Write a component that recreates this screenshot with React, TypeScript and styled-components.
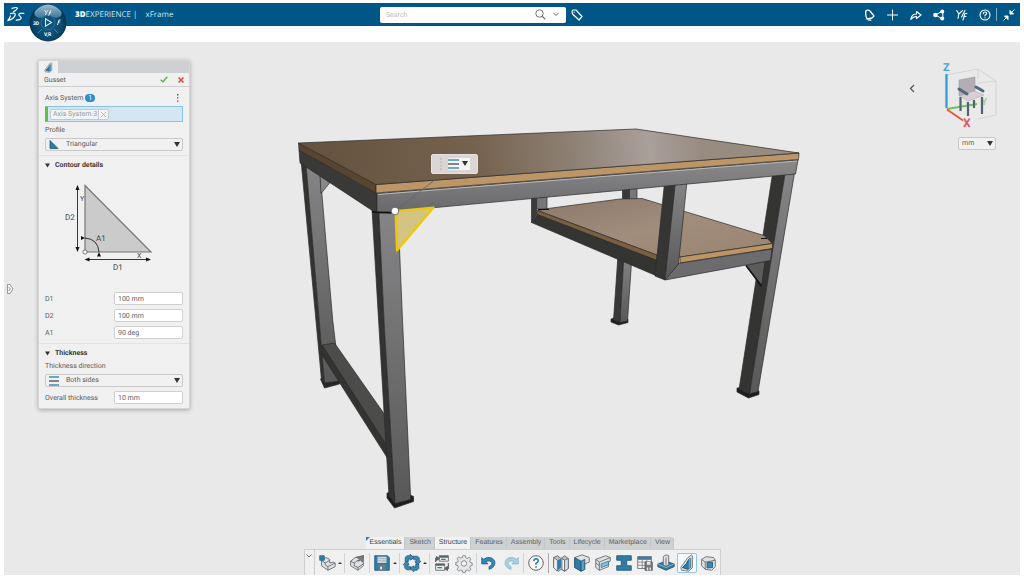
import React from "react";
import styled, { createGlobalStyle } from "styled-components";

const GlobalStyle = createGlobalStyle`
  *, *::before, *::after { box-sizing: border-box; }
  body {
    margin: 0;
    background: #ffffff;
    color: #5c5c5c;
    font: 7px/10px Roboto, "Liberation Sans", sans-serif;
    text-rendering: geometricPrecision;
  }
  button, input, select { font: inherit; color: inherit; margin: 0; padding: 0; text-rendering: inherit; }
  button { border: 0; background: none; cursor: pointer; }
  svg { display: block; }
`;

const Frame = styled.div`
  display: flex;
  flex-direction: column;
  min-height: 100vh;
  padding: 3px 4px;
`;

/* ---------- top bar ---------- */

const TopBar = styled.header`
  display: grid;
  grid-template-columns: 37% 186px 1fr;
  align-items: center;
  height: 23px;
  background: #005686;
  color: #ffffff;
`;

const BrandArea = styled.div`
  display: flex;
  align-items: center;
  height: 23px;
  padding-left: 3px;
`;

const Compass = styled.button`
  align-self: flex-start;
  width: 38px;
  height: 39px;
  margin: 0 8px 0 4px;
  z-index: 2;
`;

const Brand = styled.h1`
  display: flex;
  gap: 8px;
  margin: 0;
  font: 400 8px/12px "Open Sans", "Noto Sans", sans-serif;
  color: #d5e4ee;
  white-space: nowrap;

  b { color: #ffffff; font-weight: 800; }
`;

const SearchBox = styled.form`
  display: flex;
  align-items: center;
  height: 16px;
  padding: 0 3px 0 6px;
  border-radius: 2px;
  background: #ffffff;
`;

const SearchInput = styled.input`
  flex: 1;
  min-width: 0;
  border: 0;
  outline: 0;
  background: none;
  color: #555555;

  &::placeholder { color: #bdbdbd; opacity: 1; }
`;

const BarButton = styled.button<{ $w?: number }>`
  display: flex;
  align-items: center;
  justify-content: center;
  width: ${(p) => p.$w ?? 23}px;
  height: 16px;
`;

const BarActions = styled.div`
  display: flex;
  align-items: center;
  justify-content: space-between;
`;

const ActionGroup = styled.div`
  display: flex;
  align-items: center;
`;

const BarDivider = styled.span`
  width: 1px;
  height: 13px;
  background: #7fabc3;
`;

const SubBar = styled.div`
  height: 16px;
  background: #ffffff;
`;

/* ---------- viewport ---------- */

const Stage = styled.main`
  position: relative;
  display: flex;
  flex: 1;
  flex-direction: column;
  justify-content: space-between;
  background: #e9e9e9;
`;

const ModelLayer = styled.div`
  position: absolute;
  inset: 0;
`;

const FloatingBar = styled.div`
  position: absolute;
  left: 42%;
  top: 21%;
  display: flex;
  align-items: center;
  justify-content: space-between;
  width: 47px;
  height: 20px;
  padding: 0 7px 0 8px;
  border: 1px solid #e4e2e0;
  border-radius: 2px;
  background: #d9d6d3;
`;

const FloatingButton = styled.button`
  display: flex;
  align-items: center;
  gap: 3px;
  width: 22px;
  height: 12px;
  border-radius: 1px;
  background: #f4f4f4;
`;

const Overlay = styled.div`
  position: relative;
  display: flex;
  align-items: flex-start;
  padding-top: 18px;
`;

const TreeToggle = styled.button`
  width: 8px;
  height: 12px;
  margin: 223px 24px 0 2px;
`;

/* ---------- gusset panel ---------- */

const Panel = styled.section`
  width: 152px;
  border: 1px solid #d6d6d6;
  background: #f0f0f0;
  border-radius: 2px;
  box-shadow: 0 1px 4px rgba(0, 0, 0, 0.3);
`;

const PanelTabs = styled.div`
  display: flex;
  height: 12px;
  background: #cdd1d3;
`;

const PanelTab = styled.button`
  display: flex;
  align-items: center;
  justify-content: center;
  width: 19px;
  height: 12px;
  background: #f0f0f0;
`;

const PanelTitle = styled.div`
  display: flex;
  align-items: center;
  height: 14px;
  padding: 0 3px 0 5px;
  border-bottom: 1px solid #cfcfcf;

  h2 { flex: 1; margin: 0; font: inherit; }
`;

const TitleButton = styled.button`
  display: flex;
  justify-content: center;
  width: 10px;
  margin-left: 7px;
`;

const Group = styled.div<{ $top?: number }>`
  padding: ${(p) => p.$top ?? 4}px 6px 4px;

  & + & { border-top: 1px solid #e3e3e3; }
`;

const Caption = styled.div<{ $top?: number }>`
  display: flex;
  align-items: center;
  height: 10px;
  margin: ${(p) => p.$top ?? 0}px 0 3px;
`;

const CountBadge = styled.span`
  width: 10px;
  height: 8px;
  margin-left: 2px;
  border-radius: 4px;
  background: #2f8dcb;
  color: #ffffff;
  line-height: 8px;
  text-align: center;
`;

const MoreButton = styled.button`
  width: 8px;
  margin-left: auto;
`;

const SelectionField = styled.div`
  display: flex;
  align-items: center;
  height: 16px;
  padding-left: 2px;
  border: 1px solid #86c3e6;
  border-left: 3px solid #5bbf4c;
  border-radius: 1px;
  background: #d4e6f1;
`;

const Chip = styled.span`
  display: flex;
  align-items: center;
  height: 11px;
  padding-left: 2px;
  border: 1px solid #c3c9cc;
  border-radius: 2px;
  background: #f2f4f5;
  color: #9a9a9a;
`;

const ChipClose = styled.button`
  display: flex;
  align-items: center;
  justify-content: center;
  width: 10px;
  height: 9px;
  margin-left: 1px;
  border-left: 1px solid #c3c9cc;
`;

const SelectWrap = styled.div<{ $w?: number }>`
  display: grid;
  width: ${(p) => (p.$w ? `${p.$w}px` : "auto")};
  height: 13px;
  align-items: center;

  & > * { grid-area: 1 / 1; }
  & > svg { pointer-events: none; z-index: 1; }
  & > svg:first-child { margin-left: 4px; }
  & > svg:last-child { justify-self: end; margin: 0 3px 0 0; }
`;

const Select = styled.select<{ $indent: number }>`
  appearance: none;
  width: 100%;
  height: 13px;
  padding: 0 12px 0 ${(p) => p.$indent}px;
  border: 1px solid #c9c9c9;
  border-radius: 2px;
  background: #f1f1f1;
  line-height: 11px;
`;

const SectionToggle = styled.button`
  display: flex;
  align-items: center;
  gap: 5px;
  height: 10px;
  color: #3a3a3a;
  font-weight: 700;
`;

const Diagram = styled.svg`
  width: 100%;
  height: 122px;
  font-family: Roboto, "Liberation Sans", sans-serif;
`;

const Field = styled.div`
  display: flex;
  align-items: center;
  justify-content: space-between;
  height: 13px;

  * + & { margin-top: 4px; }
  svg + & { margin-top: 0; }
`;

const FieldInput = styled.input`
  width: 69px;
  height: 13px;
  padding: 0 3px;
  border: 1px solid #cfcfcf;
  border-radius: 2px;
  background: #ffffff;
`;

/* ---------- view controls ---------- */

const ViewTools = styled.aside`
  display: flex;
  align-items: flex-start;
  margin: 0 24px 0 auto;
`;

const ViewCollapse = styled.button`
  margin: 24px 27px 0 0;
`;

const ViewStack = styled.div`
  display: flex;
  flex-direction: column;
  align-items: flex-end;
  gap: 9px;
`;

const Cube = styled.svg`
  width: 54px;
  height: 68px;
  overflow: visible;
`;

/* ---------- action bar ---------- */

const ActionBar = styled.footer`
  position: relative;
  align-self: center;
`;

const TabList = styled.div`
  display: flex;
  width: max-content;
  margin-left: 62px;
  border-radius: 3px 3px 0 0;
  overflow: hidden;
  font-family: "Liberation Sans", Arial, sans-serif;
`;

const Tab = styled.button<{ $open: boolean }>`
  height: 12px;
  padding: 0 4px;
  background: ${(p) => (p.$open ? "#f2f2f2" : "#ced1d2")};
  box-shadow: inset -1px 0 0 #c3c7c8;
  color: ${(p) => (p.$open ? "#3f4142" : "#5f6263")};
  white-space: nowrap;
`;

const EssentialMark = styled.i`
  position: absolute;
  left: 62px;
  top: 0;
  border-top: 4px solid #2f7fab;
  border-right: 4px solid transparent;
`;

const ToolRow = styled.div`
  display: flex;
  align-items: center;
  height: 26px;
  border: 1px solid #cfcfcf;
  border-bottom: 0;
  background: #f0f0f0;
`;

const CollapseButton = styled.button`
  align-self: stretch;
  display: flex;
  justify-content: center;
  width: 10px;
  padding-top: 4px;
  border-right: 1px solid #cfcfcf;
`;

const ToolGroup = styled.div<{ $gap?: number; $strong?: boolean }>`
  display: flex;
  gap: ${(p) => p.$gap ?? 2}px;
  padding: 0 2px;
  border-left: 1px solid ${(p) => (p.$strong ? "#a9a9a9" : "#d3d3d3")};

  ${CollapseButton} + & { border-left: 0; }
`;

const ToolButton = styled.button<{ $menu?: boolean; $on?: boolean }>`
  display: flex;
  align-items: center;
  gap: 1px;
  width: ${(p) => (p.$menu ? 25 : 20)}px;
  height: 20px;
  border-radius: 2px;
  background: ${(p) => (p.$on ? "#f8fbfd" : "none")};
  box-shadow: ${(p) => (p.$on ? "inset 0 0 0 1px #93c5e0" : "none")};

  &::after {
    content: "";
    display: ${(p) => (p.$menu ? "block" : "none")};
    border: 2px solid transparent;
    border-top: 0;
    border-bottom: 2px solid #333333;
  }
`;

/* ---------- drawings ---------- */

const Caret = ({ size = 6 }: { size?: number }) => (
  <svg width={size} height="5" viewBox="0 0 6 5"><path d="M0 0h6L3 5z" fill="#333" /></svg>
);

const LinesIcon = ({ w = 10 }: { w?: number }) => (
  <svg width={w} height="10" viewBox="0 0 10 10" preserveAspectRatio="none">
    <path d="M0 1h10M0 9h10" stroke="#3f8fb8" strokeWidth="1.4" />
    <path d="M0 5h10" stroke="#555" strokeWidth="1.4" />
  </svg>
);

const GussetGlyph = ({ size }: { size: number }) => (
  <svg width={size} height={size} viewBox="0 0 20 20" strokeLinejoin="round">
    <path d="M3 15L11 4l4-3 1 1v13l-4 4-8-1z" fill="#d9dcde" stroke="#6b6f72" strokeWidth=".9" />
    <path d="M5 15q5-4 7-9l2-1v10l-3 2z" fill="#2f7da6" stroke="#144866" />
    <path d="M12 6l2-2v11l-2 2z" fill="#6aa5c2" />
  </svg>
);

const LogoDS = () => (
  <svg width="18" height="17" viewBox="0 0 18 17" fill="none" stroke="#fff" strokeWidth="1.2" strokeLinecap="round" strokeLinejoin="round">
    <path d="M5 2.400Q9.800.900 10.300 2.100 10.300 3.800 6.500 5.800" />
    <path d="M3.400 7.600Q8.800 6.400 8.200 9 6.800 13 .9 14.600L3.600 10" />
    <path d="M16.800 7.400q-5-.5-5 1.200 0 1.100 1.500 2 1.700 1.500-.1 2.700-1.500.9-4 .8" />
  </svg>
);

const CompassArt = () => (
  <svg width="38" height="39" viewBox="0 0 38 39">
    <defs>
      <radialGradient id="cp" cx=".5" cy=".55" r=".5">
        <stop offset="0" stopColor="#17608b" />
        <stop offset=".8" stopColor="#0a4569" />
        <stop offset="1" stopColor="#063351" />
      </radialGradient>
      <linearGradient id="cs" x1="0" y1="0" x2="0" y2="1">
        <stop offset="0" stopColor="#9dbed1" />
        <stop offset="1" stopColor="#3c7699" />
      </linearGradient>
    </defs>
    <circle cx="19" cy="20" r="18.500" fill="url(#cp)" />
    <path d="M6 8Q12 1.500 19 1.500T32 8q2 4-2 6-3 1.500-5 .5-6-4-12 0-2 1-5-.5-4-2-2-6z" fill="url(#cs)" />
    <path d="M9 30l4-4M29 30l-4-4" stroke="#3984ad" />
    <circle cx="19" cy="19.500" r="7" fill="#0f5179" stroke="#2c7aa5" strokeWidth=".8" />
    <path d="M16.500 15.800l6 3.700-6 3.700z" fill="none" stroke="#d7e8f2" strokeWidth="1.100" />
    <path d="M15.500 7.200l1.800 2.300 1.700-2.300M17.300 9.500l-.8 2.500M22 7l-2.500 5.500M20.200 9.800h2M31.500 17h-1.500l-1.500 5M29.200 19h2" fill="none" stroke="#e9f2f7" />
    <g fill="#fff" fontFamily="Roboto, sans-serif" fontWeight="700" fontSize="5">
      <text x="4" y="21.500">3D</text>
      <text x="15" y="33">V,R</text>
    </g>
  </svg>
);

const stroke = { fill: "none", stroke: "#fff", strokeWidth: 1.3, strokeLinejoin: "round", strokeLinecap: "round" } as const;

const barIcons: { name: string; art: React.ReactNode }[] = [
  { name: "Notifications", art: <g {...stroke}><path d="M2 1.500Q4.500.500 6 2l4 5-2 2-5 1Q1 6 2 1.500z" /><path d="M4.500 10.800l2.300.4" /></g> },
  { name: "Add", art: <path d="M5.500 1v10M.5 6h10" {...stroke} strokeWidth={1} /> },
  { name: "Share", art: <path d="M.8 10.500q.7-5.500 5.700-5.500V2.500L11 6 6.500 9.500V7.500Q3 7.500.8 10.500z" {...stroke} strokeWidth={1.100} /> },
  { name: "Collaborate", art: <g><path d="M9.500 2l-7 4 7 4z" {...stroke} strokeWidth={1} /><circle cx="9.200" cy="2.500" r="2" fill="#fff" /><circle cx="2.400" cy="6" r="2.200" fill="#fff" /><circle cx="9.200" cy="9.500" r="2" fill="#fff" /></g> },
  { name: "Tools", art: <g {...stroke} strokeWidth={1.100}><path d="M.8 1.500l2 3.500L6.500 1.500M2.800 5L2 9.500M11 4.500H9L7 11M7.700 7.500H10M9 1.500L5.500 8" /></g> },
  { name: "Help", art: <g {...stroke} strokeWidth={1.100}><circle cx="6" cy="6" r="5" /><path d="M4.300 4.700q.2-1.700 1.800-1.700t1.600 1.500Q7.600 5.400 6 6.200V7M6 8.700v.2" /></g> },
];

const C = { edge: "#5d6265", light: "#dfe2e4", mid: "#b9bec1", blue: "#2f7da6", pale: "#8fbdd4" };

const art: Record<string, React.ReactNode> = {
  newPart: <g stroke={C.edge}><path d="M4 7l5-3 4 2v4l4-1 2 1v4l-8 4-7-5z" fill={C.light} /><path d="M4 7l4 3v2l3 2 8-4M8 10l5-3M11 14v4" fill="none" /><path d="M2 2h5v5H2z" fill={C.blue} stroke="#1f6b94" /></g>,
  openPart: <g stroke={C.edge}><path d="M3 8l5-4 9-2v11l-6 5-8-5z" fill={C.light} /><path d="M3 8l4 2v3l4 2 6-4M7 10l4-3M11 15v3" fill="none" /><path d="M9 4l8-2-1 7-2-2-3 1 2-3z" fill="#7d8285" /></g>,
  save: <g><path d="M2 2h14l2 2v14H2z" fill={C.blue} stroke="#1d5676" /><path d="M5 3h10v7H5z" fill="#cfd4d7" /><path d="M5 5h10M5 7.500h10" stroke="#9aa1a5" strokeWidth=".6" /><path d="M6 12h8v6H6z" fill="#747b80" /><path d="M8 14h2v3H8z" fill="#eee" /></g>,
  update: (
    <g>
      {[0, 90, 180, 270].map((a) => (
        <path key={a} transform={`rotate(${a} 10 10)`} d="M2.500 8.500V4l2-2H8V.300L12.300 4 8 7.500V5.500H6v3z" fill="#3a8ab4" stroke="#1d5676" strokeWidth=".8" />
      ))}
      <circle cx="10" cy="10" r="3.300" fill="#f0f0f0" />
    </g>
  ),
  swap: <g stroke={C.edge}><path d="M7 2h10v6H7zM3 11h10v7H3z" fill="#eef0f1" /><path d="M7 3h10M3 12h10" strokeWidth="2.200" /><path d="M9 6h5M5 15h5" stroke={C.blue} strokeWidth="1.400" /><path d="M3 9V5h3M17 10v6h-3M4 3l3 2-3 2zM16 14l-3 2 3 2z" fill="none" strokeWidth="1.300" /></g>,
  gear: <g fill="#e6e8e9" stroke="#777b7e"><path d="M8.600 2h2.800l.5 2.300 1.700.7 2-1.300 2 2-1.300 2 .7 1.700 2 .5v2.800l-2 .5-.7 1.700 1.300 2-2 2-2-1.300-1.700.7-.5 2H8.600l-.5-2-1.700-.7-2 1.300-2-2 1.300-2L3 12.700l-2-.5V9.400l2-.5.700-1.700-1.300-2 2-2 2 1.300L8.100 4z" /><circle cx="10" cy="10.500" r="3" fill="#f5f5f5" /></g>,
  undo: <path d="M2 4l2 2q4-3.500 9-1.500 5 3 3 8-1.500 3.500-6 4.500v-3q4-1.500 3-4.500Q11 6.500 6.500 8.500L9 11H2z" fill="#3586b2" stroke="#1c5c80" strokeWidth=".8" />,
  redo: <path d="M18 4l-2 2Q12 2.500 7 4.500q-5 3-3 8Q5.500 16 10 17v-3q-4-1.500-3-4.500Q9 6.500 13.500 8.500L11 11h7z" fill="#a9d0e3" stroke="#7fb3cc" strokeWidth=".8" />,
  help: <g fill="none"><circle cx="10" cy="10" r="8" fill="#fafafa" stroke="#666" strokeWidth="1.100" /><path d="M7.500 8q.2-2.600 2.600-2.600T12.500 7.700Q12.400 9 10 10.500V12M10 13.600v1.500" stroke="#2b7aa5" strokeWidth="1.700" /></g>,
  profile: <g stroke={C.edge}><path d="M2 4l4-2 4 3 4-3 4 3v11l-4 3-4-2-3 2-5-4z" fill={C.mid} /><path d="M2 4l4 3v12l-4-4zM11 5l3 2v12l-3-2z" fill="#f4f5f5" /><path d="M14 7l4-2v11l-4 3z" fill="#dfe2e4" /><path d="M6.500 7L10 5v10l-3.500 3z" fill={C.blue} stroke="none" /></g>,
  plate: <g stroke={C.edge}><path d="M2 4l8-3 8 3v5l-5 2v6l-4 2-7-4z" fill={C.light} /><path d="M2 4l7 4v11l-7-4z" fill={C.blue} stroke="#1d5676" /><path d="M9 8l4-2v11l-4 2z" fill="#5f9fbe" stroke="#1d5676" /></g>,
  trim: <g stroke={C.edge}><path d="M2 6l11-4 5 2v4l-2 1v5L6 18l-4-3z" fill={C.light} /><path d="M2 6l4 3 12-5M6 9v9M2 10l4 3" fill="none" /><path d="M8 11l8-3v4l-8 3z" fill={C.pale} stroke={C.blue} /></g>,
  beam: <path d="M2 2h16v5h-5v6h5v5H2v-5h5V7H2z" fill={C.blue} stroke="#1d5676" />,
  table: <g><path d="M2 3h15v13H2z" fill="#f4f5f5" stroke={C.edge} /><path d="M2 3h15v3.500H2z" fill="#46799a" /><path d="M2 9h15M2 12.500h15M7 6v10M12 6v10" stroke="#7b8083" /><path d="M10 9h8v9h-8z" fill="#777c7f" stroke="#555" /><path d="M12 9h4v3h-4zM12 15h1.500v3H12zM15 15h1.500v3H15z" fill="#e7e9ea" /></g>,
  foot: <g stroke={C.edge}><path d="M1 11l9-3 9 3v3l-9 4-9-4z" fill={C.blue} stroke="#1d5676" /><path d="M1 11l9 4 9-4" fill="none" stroke={C.pale} /><path d="M7 3l3-2 3 1v10l-3 2-3-2z" fill={C.light} /><path d="M10 4v10" /></g>,
  gusset: <GussetGlyph size={20} />,
  cap: <g stroke={C.edge}><path d="M3 6l5-3 8 1 2 3v7l-4 4-7-1-4-4z" fill={C.light} /><path d="M3 6l4 3 11-2M7 9v8" fill="none" /><path d="M9 9.500l6-.500v6l-6 .500z" fill="#3d86ad" stroke="#1d5676" /></g>,
};

type ToolDef = { id: string; name: string; menu?: boolean; on?: boolean };
const toolGroups: ToolDef[][] = [
  [{ id: "newPart", name: "New part", menu: true }],
  [{ id: "openPart", name: "Open part" }],
  [{ id: "save", name: "Save", menu: true }],
  [{ id: "update", name: "Update", menu: true }],
  [{ id: "swap", name: "Switch windows" }, { id: "gear", name: "Settings" }],
  [{ id: "undo", name: "Undo" }, { id: "redo", name: "Redo" }],
  [{ id: "help", name: "Help" }],
  [
    { id: "profile", name: "Structure member" },
    { id: "plate", name: "Corner" },
    { id: "trim", name: "Trim" },
    { id: "beam", name: "Profile" },
    { id: "table", name: "Cut list" },
    { id: "foot", name: "Foot plate" },
    { id: "gusset", name: "Gusset", on: true },
    { id: "cap", name: "End cap" },
  ],
];

const tabs = ["Essentials", "Sketch", "Structure", "Features", "Assembly", "Tools", "Lifecycle", "Marketplace", "View"];
const openTabs = ["Essentials", "Structure"];

const Desk = () => (
  <svg width="100%" height="100%" viewBox="4 42 1016 533" role="img" aria-label="Desk frame model">
    <defs>
      <linearGradient id="wood" gradientUnits="userSpaceOnUse" x1="330" y1="170" x2="700" y2="130">
        <stop offset="0" stopColor="#665441" />
        <stop offset=".4" stopColor="#75634f" />
        <stop offset=".65" stopColor="#8d8074" />
        <stop offset=".86" stopColor="#a9a09a" />
        <stop offset="1" stopColor="#988b80" />
      </linearGradient>
      <linearGradient id="shelf" x1="0" y1="0" x2="1" y2="1">
        <stop offset="0" stopColor="#8b7869" />
        <stop offset=".5" stopColor="#a18d7c" />
        <stop offset="1" stopColor="#9a8370" />
      </linearGradient>
      <linearGradient id="beamFace" x1="0" y1="0" x2="0" y2="1">
        <stop offset="0" stopColor="#8a8a8c" />
        <stop offset="1" stopColor="#68686a" />
      </linearGradient>
      <linearGradient id="leg" x1="0" y1="0" x2="0" y2="1">
        <stop offset="0" stopColor="#858587" />
        <stop offset="1" stopColor="#585858" />
      </linearGradient>
    </defs>
    <g stroke="#2b2b2b" strokeWidth=".7" strokeLinejoin="round">
      {/* rear right leg */}
      <path d="M611 319l8-2 9 2v3.500l-9.500 2.500-7.500-3z" fill="#1f1f1f" />
      <path d="M618 255h6l-4 67.500-6.500-2.500z" fill="#383837" />
      <path d="M624 255h8l-4.500 66-7.500 1.500z" fill="url(#leg)" />
      <path d="M622.500 186h7v14h-7z" fill="#383837" />
      <path d="M629.500 186h7.500v14h-7.500z" fill="#77777a" />
      {/* rear left leg */}
      <path d="M320.500 379l3-2 16 3v4l-15 4z" fill="#262626" />
      <path d="M301 160l5 4 18.500 219-3-3z" fill="#333332" />
      <path d="M306 164l14 8 12.700 148 7.300 61-15.500 2z" fill="url(#leg)" />
      <path d="M320 175l10 7.500-9 11z" fill="#88888a" />
      {/* lower rail */}
      <path d="M322 345l12.500-2 54 77v32z" fill="#4c4c4a" />
      <path d="M322 345v10l66 104v-12z" fill="#333331" />
      {/* right leg */}
      <path d="M737 388l11-1 11 4v3.500L748.500 398 737 392z" fill="#1d1d1d" />
      <path d="M772.500 174H785l-35.500 220-10.500-4.500z" fill="#343433" />
      <path d="M785 174l9.500-1L758 391.500l-8.500 2.500z" fill="url(#leg)" />
      <path d="M746 265.500l19-4-3.500 25z" fill="#5c5c5d" />
      <path d="M746 265.500l15.500 20.500" stroke="#111" strokeWidth="1.600" />
      {/* shelf */}
      <path d="M531.500 197h5.200v17l-5.200 8.500z" fill="#3a3a3a" />
      <path d="M536.700 197h10.300v12h-10.300z" fill="#77777a" />
      <path d="M538 210.500l10-2 72-9.500 22-.5 122 37 8.500 8-92 13.500-24-2z" fill="url(#shelf)" />
      <path d="M537 210.500l120 44.500v5.500L537 214.500z" fill="#7b5f40" />
      <path d="M680 257l92.500-13.500v5L680 263z" fill="#bd9565" />
      <path d="M531.500 222.500l5.500-8 120 46v15.500z" fill="#343433" />
      <path d="M678 263.500l94-14.500-1.500 11.500L665 280z" fill="#6c6c6e" />
      <path d="M538 209.500h11M761 238.500h6" stroke="#111" strokeWidth="1" />
      {/* middle post */}
      <path d="M664.500 183l11-1-10.500 98-10-4z" fill="#353534" />
      <path d="M675.500 182l11.500-1-8.500 83L665 280z" fill="url(#leg)" />
      {/* front left leg */}
      <path d="M387 493l14-2 12.500 5.500v5L394.500 508 387 498z" fill="#1e1e1e" />
      <path d="M372 209l7 4 5 107 11 183.500-6-7.500z" fill="#333332" />
      <path d="M379 213h19l4.500 107 8.200 179.500L395 503.500 384 320z" fill="url(#leg)" />
      {/* top frame and board */}
      <path d="M299 150l78 43.500v19.500l-4-2-73-48z" fill="#393938" />
      <path d="M377 193.500L798 160l-2.500 14L377 213z" fill="url(#beamFace)" />
      <path d="M378 194.500l419-33.500" stroke="#b9b9bb" strokeWidth="1" />
      <path d="M298.500 143L376 184.500v8.500l-77-43z" fill="#59452f" />
      <path d="M376 184.500L799 153l-.5 6.500L376 193z" fill="#bd9668" />
      <path d="M298.500 143L636 129l163 24-423 31.500z" fill="url(#wood)" />
      <path d="M372 212l26 1" stroke="#111" strokeWidth="1.300" />
    </g>
    <path d="M441 175l-46 36" stroke="#66625f" strokeWidth=".8" />
    <path d="M395.500 211l38-3.500-36.500 43z" fill="#d4c482" stroke="#f0c800" strokeWidth="2.200" strokeLinejoin="round" />
    <circle cx="395" cy="211" r="3.800" fill="#fff" stroke="#555" strokeWidth=".8" />
  </svg>
);

const ViewCube = () => (
  <Cube viewBox="0 0 54 68">
    <path d="M4 15l32-6 18 12v34l-18 4M36 9v10M54 21L36 23M4 15v34" fill="none" stroke="#cfcfcf" strokeWidth=".8" />
    <path d="M4.500 14v34" stroke="#2e9bd8" strokeWidth="2.200" />
    <path d="M5 49l30-5" stroke="#7dba5d" strokeWidth="1.800" />
    <path d="M5 49.500l16 11" stroke="#e8553f" strokeWidth="1.800" />
    <g fontFamily="Roboto, sans-serif" fontWeight="700" fontSize="11">
      <text x="1" y="11" fill="#45a5da">Z</text>
      <text x="39" y="45" fill="#a5cf90" fontSize="10">Y</text>
      <text x="21" y="67" fill="#e55368" fontSize="12">X</text>
    </g>
    <g stroke="#4e6470" strokeWidth="2.200"><path d="M18.500 37v14M26 42v14M32 40v8M40 37v17" /></g>
    <path d="M17 20l16-3v15l-16 4z" fill="#b4adb5" stroke="#99939c" strokeWidth=".5" />
    <path d="M18 36l14-5 10 4-16 6z" fill="#d8cfd6" stroke="#a9a2a8" strokeWidth=".5" />
    <path d="M17 29l8 5M34 27l7 4" stroke="#4e6b7e" strokeWidth="3" strokeLinecap="round" />
  </Cube>
);

const GussetDiagram = () => (
  <Diagram viewBox="0 0 138 122" fill="#444" fontSize="8">
    <path d="M40 15.500V82h66z" fill="#cbcbcb" stroke="#777" strokeWidth="1.200" />
    <g stroke="#222" strokeWidth=".9" fill="none">
      <path d="M32.500 18v61M42 89.500h62" />
      <path d="M40 68q13 1 14 14" />
    </g>
    <path d="M32.500 15l2 5h-4zM32.500 82l2-5h-4zM39.500 89.500l5-2v4zM106 89.500l-5-2v4zM40 68l-4-2v4zM54 82l-2 4.500h4z" fill="#111" />
    <circle cx="40" cy="82" r="2.100" fill="#fff" stroke="#666" strokeWidth=".9" />
    <text x="20" y="50">D2</text>
    <text x="68" y="100">D1</text>
    <text x="51" y="71">A1</text>
    <text x="35" y="31" fontSize="7">Y</text>
    <text x="92" y="88" fontSize="7">X</text>
  </Diagram>
);

export default function App() {
  return (
    <>
      <GlobalStyle />
      <Frame>
        <TopBar>
          <BrandArea>
            <LogoDS />
            <Compass aria-label="Compass"><CompassArt /></Compass>
            <Brand><span><b>3D</b>EXPERIENCE |</span><span>xFrame</span></Brand>
          </BrandArea>
          <SearchBox role="search" onSubmit={(e) => e.preventDefault()}>
            <SearchInput type="search" placeholder="Search" aria-label="Search" />
            <BarButton type="submit" $w={16} aria-label="Run search">
              <svg width="11" height="11" viewBox="0 0 11 11" fill="none" stroke="#777"><circle cx="4.500" cy="4.500" r="3.700" /><path d="M7.200 7.200l3 3" strokeWidth="1.300" /></svg>
            </BarButton>
            <BarButton type="button" $w={14} aria-label="Search options">
              <svg width="6" height="5" viewBox="0 0 6 5" fill="none" stroke="#666"><path d="M.5 1L3 3.500 5.500 1" /></svg>
            </BarButton>
          </SearchBox>
          <BarActions>
            <BarButton aria-label="Tags">
              <svg width="12" height="12" viewBox="0 0 12 12" {...stroke} strokeWidth={1.200}><path d="M1 2.500L2 1h3l6 6.500L8 11 1.500 5zM3.200 3.200v.1" /></svg>
            </BarButton>
            <ActionGroup>
              {barIcons.map((i) => (
                <BarButton key={i.name} aria-label={i.name}><svg width="12" height="12" viewBox="0 0 12 12">{i.art}</svg></BarButton>
              ))}
              <BarDivider />
              <BarButton aria-label="Minimize">
                <svg width="12" height="12" viewBox="0 0 12 12" stroke="#fff" fill="#fff" strokeWidth="1"><path d="M11.500.5L8 4M.5 11.500L4 8" /><path d="M7 1.500V5h3.500zM1.500 7H5v3.500z" /></svg>
              </BarButton>
            </ActionGroup>
          </BarActions>
        </TopBar>
        <SubBar />
        <Stage>
          <ModelLayer>
            <Desk />
            <FloatingBar>
              <svg width="2" height="12" viewBox="0 0 2 12"><path d="M1 0v12" stroke="#aaa" strokeDasharray="1.500 2" /></svg>
              <FloatingButton aria-label="Thickness direction">
                <LinesIcon w={11} />
                <Caret />
              </FloatingButton>
            </FloatingBar>
          </ModelLayer>
          <Overlay>
            <TreeToggle aria-label="Show tree">
              <svg width="8" height="12" viewBox="0 0 8 12" fill="#fafafa" stroke="#8c8c8c" strokeWidth=".9"><path d="M1.500 1.500H4L7 6l-3 4.500H1.500zM2.500 4l2 2-2 2" /></svg>
            </TreeToggle>
            <Panel aria-label="Gusset">
              <PanelTabs><PanelTab aria-label="Gusset definition"><GussetGlyph size={11} /></PanelTab></PanelTabs>
              <PanelTitle>
                <h2>Gusset</h2>
                <TitleButton aria-label="Accept"><svg width="8" height="7" viewBox="0 0 8 7" fill="none" stroke="#58b947" strokeWidth="1.500"><path d="M.7 3.700l2.300 2L7.300.8" /></svg></TitleButton>
                <TitleButton aria-label="Cancel"><svg width="6" height="6" viewBox="0 0 6 6" stroke="#e14b3c" strokeWidth="1.500"><path d="M.5.5l5 5M5.500.5l-5 5" /></svg></TitleButton>
              </PanelTitle>
              <Group $top={6}>
                <Caption>
                  <span id="axis-label">Axis System</span>
                  <CountBadge>1</CountBadge>
                  <MoreButton aria-label="More options"><svg width="8" height="8" viewBox="0 0 8 8" fill="#555"><path d="M2 0h1.400v1.400H2zM2 3.200h1.400v1.400H2zM2 6.400h1.400v1.400H2z" /></svg></MoreButton>
                </Caption>
                <SelectionField role="group" aria-labelledby="axis-label">
                  <Chip>Axis System.3
                    <ChipClose aria-label="Remove Axis System.3"><svg width="5" height="5" viewBox="0 0 5 5" stroke="#aaa" strokeWidth=".8"><path d="M0 0l5 5M5 0L0 5" /></svg></ChipClose>
                  </Chip>
                </SelectionField>
                <Caption as="label" htmlFor="profile" $top={3}>Profile</Caption>
                <SelectWrap>
                  <svg width="10" height="9" viewBox="0 0 10 9"><path d="M1 .5V8.500H9z" fill="#2f7da6" stroke="#1d5676" strokeWidth=".8" /></svg>
                  <Select id="profile" $indent={20} defaultValue="Triangular"><option>Triangular</option></Select>
                  <Caret />
                </SelectWrap>
              </Group>
              <Group>
                <SectionToggle aria-expanded="true"><Caret size={5} />Contour details</SectionToggle>
                <GussetDiagram />
                <Field><label htmlFor="d1">D1</label><FieldInput id="d1" defaultValue="100 mm" /></Field>
                <Field><label htmlFor="d2">D2</label><FieldInput id="d2" defaultValue="100 mm" /></Field>
                <Field><label htmlFor="a1">A1</label><FieldInput id="a1" defaultValue="90 deg" /></Field>
              </Group>
              <Group>
                <SectionToggle aria-expanded="true"><Caret size={5} />Thickness</SectionToggle>
                <Caption as="label" htmlFor="direction" $top={3}>Thickness direction</Caption>
                <SelectWrap>
                  <LinesIcon />
                  <Select id="direction" $indent={20} defaultValue="Both sides"><option>Both sides</option></Select>
                  <Caret />
                </SelectWrap>
                <Field><label htmlFor="overall">Overall thickness</label><FieldInput id="overall" defaultValue="10 mm" /></Field>
              </Group>
            </Panel>
            <ViewTools>
              <ViewCollapse aria-label="Hide view tools">
                <svg width="6" height="9" viewBox="0 0 6 9" fill="none" stroke="#555" strokeWidth="1.300"><path d="M5 1L1.500 4.500 5 8" /></svg>
              </ViewCollapse>
              <ViewStack>
                <ViewCube />
                <SelectWrap $w={38}>
                  <Select aria-label="Units" $indent={3} defaultValue="mm"><option>mm</option></Select>
                  <Caret />
                </SelectWrap>
              </ViewStack>
            </ViewTools>
          </Overlay>
          <ActionBar>
            <TabList role="tablist">
              {tabs.map((name) => (
                <Tab key={name} role="tab" aria-selected={name === "Structure"} $open={openTabs.includes(name)}>{name}</Tab>
              ))}
            </TabList>
            <EssentialMark />
            <ToolRow role="toolbar" aria-label="Structure tools">
              <CollapseButton aria-label="Collapse toolbar">
                <svg width="6" height="4" viewBox="0 0 6 4" fill="none" stroke="#777"><path d="M.5.500L3 3 5.500.500" /></svg>
              </CollapseButton>
              {toolGroups.map((group, i) => (
                <ToolGroup key={i} $gap={group.length > 2 ? 1 : 2} $strong={group.length > 2}>
                  {group.map((t) => (
                    <ToolButton key={t.id} aria-label={t.name} $menu={t.menu} $on={t.on}>
                      <svg width="20" height="20" viewBox="-1 -1 22 22" strokeWidth=".9" strokeLinejoin="round">{art[t.id]}</svg>
                    </ToolButton>
                  ))}
                </ToolGroup>
              ))}
            </ToolRow>
          </ActionBar>
        </Stage>
      </Frame>
    </>
  );
}
